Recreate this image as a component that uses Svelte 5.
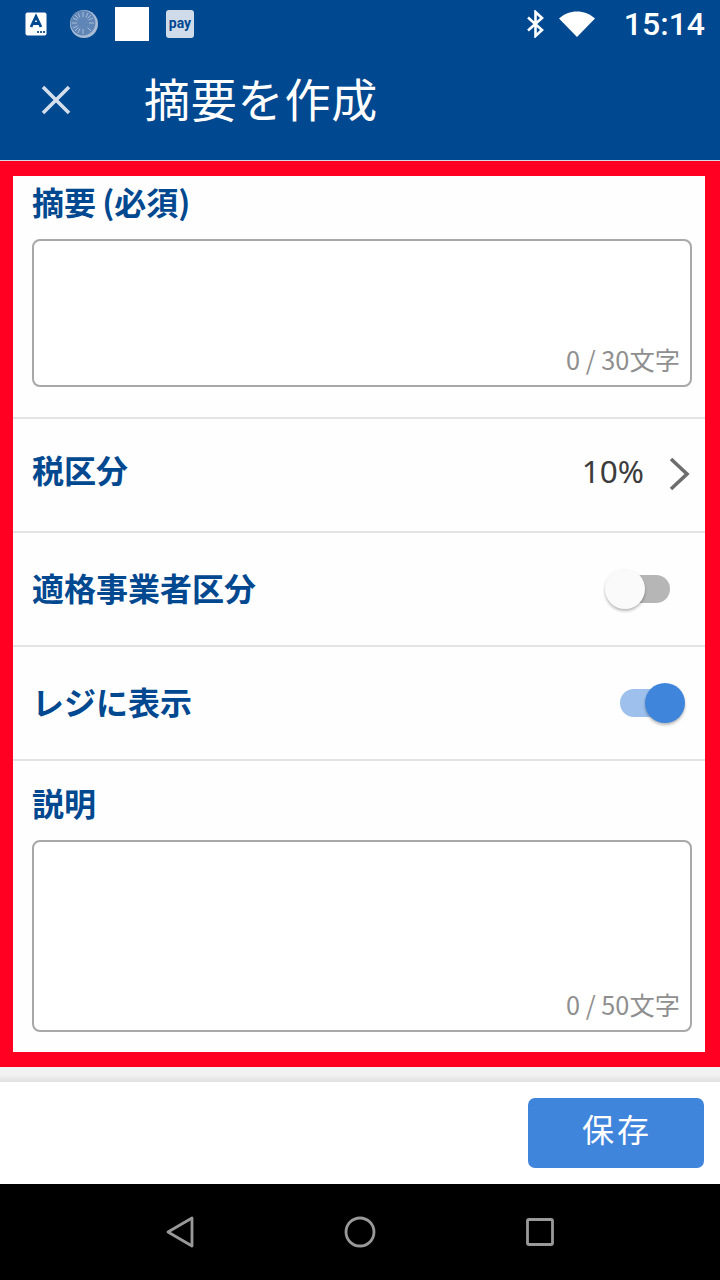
<script>
  const rows = [
    { label: '適格事業者区分', on: false },
    { label: 'レジに表示', on: true }
  ];
</script>

<div class="screen">
  <header class="top">
    <div class="status">
      <div class="status-left">
        <svg class="ic-a" width="22" height="24" viewBox="0 0 22 24">
          <rect width="21" height="23" x="0.5" y="0.5" rx="2" fill="#fff"/>
          <path d="M6 15 L11 4.5 L16 15 M8 11.5 H14" fill="none" stroke="#00488f" stroke-width="2.8"/>
          <path d="M12 19h2v2h-2zM15 19h2v2h-2zM18 19h2v2h-2z" fill="#00488f" opacity=".85"/>
        </svg>
        <svg class="ic-moon" width="28" height="28" viewBox="0 0 28 28">
          <circle cx="14" cy="14" r="14" fill="#a9bcd5"/>
          <circle cx="13" cy="13" r="12.4" fill="#5f86b6"/>
          <g stroke="#a9bcd5" stroke-width="1">
            <path d="M13 2v5M13 19v5M2 13h5M19 13h5M5 5l3.500 3.500M17.500 17.500l3.500 3.500M21 5l-3.500 3.500M8.500 17.500L5 21M8 3l2 4.500M18 3l-2 4.500M3 8l4.500 2M23 8l-4.500 2M3 18l4.500-2M8 23l2-4.500"/>
          </g>
        </svg>
        <div class="ic-square"></div>
        <div class="ic-pay"><span>pay</span></div>
      </div>
      <div class="status-right">
        <svg width="20" height="28" viewBox="0 0 20 28">
          <path d="M2 7.500 L16 20 L9.500 26 V2 L16 8 L2 20.500" fill="none" stroke="#fff" stroke-width="2.600"/>
        </svg>
        <svg class="ic-wifi" width="36" height="26" viewBox="0 0 36 26">
          <path d="M0 7.500 C10 -2 26 -2 36 7.500 L18 26 Z" fill="#fff"/>
        </svg>
        <span class="time">15:14</span>
      </div>
    </div>
    <div class="title-bar">
      <svg class="close" width="30" height="30" viewBox="0 0 30 30">
        <path d="M2 2 L28 28 M28 2 L2 28" stroke="#d5deea" stroke-width="3.600" fill="none"/>
      </svg>
      <h1>摘要を作成</h1>
    </div>
  </header>

  <main class="frame">
    <section class="field first">
      <div class="label">摘要 (必須)</div>
      <div class="box small"><span class="count">0 / 30文字</span></div>
    </section>

    <div class="row tax">
      <span class="label">税区分</span>
      <div class="value">
        <span>10%</span>
        <svg width="22" height="34" viewBox="0 0 22 34">
          <path d="M3 2 L19 17 L3 32" fill="none" stroke="#6d6d6d" stroke-width="3.600"/>
        </svg>
      </div>
    </div>

    {#each rows as row}
      <div class="row">
        <span class="label">{row.label}</span>
        <div class="switch" class:on={row.on}>
          <div class="track"></div>
          <div class="thumb"></div>
        </div>
      </div>
    {/each}

    <section class="field last">
      <div class="label">説明</div>
      <div class="box large"><span class="count">0 / 50文字</span></div>
    </section>
  </main>

  <div class="strip"></div>

  <footer class="actions">
    <button class="save">保存</button>
  </footer>

  <nav class="nav">
    <svg width="28" height="32" viewBox="0 0 28 32">
      <path d="M26 2 V30 L2 16 Z" fill="none" stroke="#999" stroke-width="2.800" stroke-linejoin="round"/>
    </svg>
    <svg width="32" height="32" viewBox="0 0 32 32">
      <circle cx="16" cy="16" r="14" fill="none" stroke="#999" stroke-width="2.800"/>
    </svg>
    <svg width="28" height="28" viewBox="0 0 28 28">
      <rect x="1.500" y="1.500" width="25" height="25" rx="1.500" fill="none" stroke="#999" stroke-width="2.800"/>
    </svg>
  </nav>
</div>

<style>
  :global(body) {
    margin: 0;
    background: #fff;
  }
  .screen {
    width: 720px;
    height: 1280px;
    display: flex;
    flex-direction: column;
    overflow: hidden;
    font-family: "Noto Sans CJK JP", "Noto Sans", sans-serif;
  }
  .top {
    height: 160px;
    background: #00488f;
    color: #fff;
    flex: none;
    border-bottom: 1px solid #d9dde3;
  }
  .status {
    height: 48px;
    display: flex;
    justify-content: space-between;
    align-items: center;
    padding: 0 15px 0 25px;
  }
  .status-left {
    display: flex;
    align-items: center;
  }
  .ic-moon {
    margin-left: 23px;
  }
  .ic-square {
    width: 34px;
    height: 34px;
    background: #fff;
    margin-left: 17px;
  }
  .ic-pay {
    width: 28px;
    height: 28px;
    margin-left: 17px;
    border-radius: 3px;
    background: #d0dbe9;
    color: #00488f;
    display: flex;
    align-items: center;
    justify-content: center;
  }
  .ic-pay span {
    font-family: "Roboto", sans-serif;
    font-weight: 700;
    font-size: 14px;
    line-height: 1;
    margin-top: -3px;
  }
  .status-right {
    display: flex;
    align-items: center;
  }
  .ic-wifi {
    margin-left: 13px;
  }
  .time {
    font-family: "Roboto", sans-serif;
    font-size: 32px;
    font-weight: 500;
    margin-left: 29px;
    line-height: 1;
  }
  .title-bar {
    height: 104px;
    display: flex;
    align-items: center;
    padding: 0 0 0 41px;
  }
  .close {
    flex: none;
  }
  h1 {
    margin: 0 0 0 73px;
    font-size: 46px;
    font-weight: 400;
    letter-spacing: 0.8px;
    line-height: 1;
    position: relative;
    top: -3px;
  }
  .frame {
    flex: none;
    box-sizing: border-box;
    height: 906px;
    border-style: solid;
    border-color: #ff0022;
    border-width: 15px 15px 15px 13px;
    background: #fefefe;
  }
  .label {
    font-size: 32px;
    font-weight: 700;
    color: #00488f;
    line-height: 46px;
  }
  .field {
    padding: 0 13px 0 19px;
    box-sizing: border-box;
  }
  .field.first {
    height: 243px;
    border-bottom: 2px solid #e3e3e3;
    padding-top: 2px;
  }
  .field.first .label {
    word-spacing: -1px;
  }
  .field.first .box {
    margin-top: 15px;
  }
  .field.last {
    height: 291px;
    padding-top: 18px;
  }
  .field.last .box {
    margin-top: 15px;
  }
  .box {
    box-sizing: border-box;
    border: 2px solid #a8a8a8;
    border-radius: 8px;
    background: #fff;
    display: flex;
    align-items: flex-end;
    justify-content: flex-end;
    padding: 0 10px 8px 0;
  }
  .box.small {
    height: 148px;
  }
  .box.large {
    height: 192px;
  }
  .count {
    font-size: 25.300px;
    line-height: 36px;
    color: #8f8f8f;
  }
  .row {
    box-sizing: border-box;
    height: 114px;
    display: flex;
    align-items: center;
    justify-content: space-between;
    padding: 0 13px 4px 19px;
    border-bottom: 2px solid #e3e3e3;
  }
  .row.tax {
    padding-bottom: 12px;
  }
  .value {
    display: flex;
    align-items: center;
    color: #3c3c3c;
    font-family: "Noto Sans", sans-serif;
    font-size: 31.500px;
    line-height: 40px;
  }
  .value span {
    padding-top: 4px;
  }
  .value svg {
    margin: 10px 2px 0 24px;
  }
  .switch {
    position: relative;
    width: 80px;
    height: 40px;
    margin-right: 7px;
    margin-top: 3px;
  }
  .track {
    position: absolute;
    left: 15px;
    top: 6px;
    width: 50px;
    height: 28px;
    border-radius: 14px;
    background: #b5b6b5;
  }
  .thumb {
    position: absolute;
    left: 0;
    top: 0;
    width: 40px;
    height: 40px;
    border-radius: 50%;
    background: #fafafa;
    box-shadow: 0 2px 3px rgba(0, 0, 0, 0.28);
  }
  .switch.on .track {
    background: #9dc0ec;
  }
  .switch.on .thumb {
    left: 40px;
    background: #3f85dc;
  }
  .strip {
    flex: none;
    height: 15px;
    background: linear-gradient(#f2f2f2 50%, #dfe0df);
  }
  .actions {
    flex: none;
    height: 102px;
    box-sizing: border-box;
    background: #fff;
    display: flex;
    justify-content: flex-end;
    padding: 16px 16px 0 0;
  }
  .save {
    width: 176px;
    height: 70px;
    border: none;
    border-radius: 7px;
    background: #3f85dc;
    color: #fff;
    font-family: inherit;
    font-size: 32px;
    letter-spacing: 3px;
    padding: 0 0 10px 2px;
  }
  .nav {
    flex: none;
    height: 96px;
    background: #000;
    display: flex;
    align-items: center;
    justify-content: center;
    gap: 150px;
  }
</style>
